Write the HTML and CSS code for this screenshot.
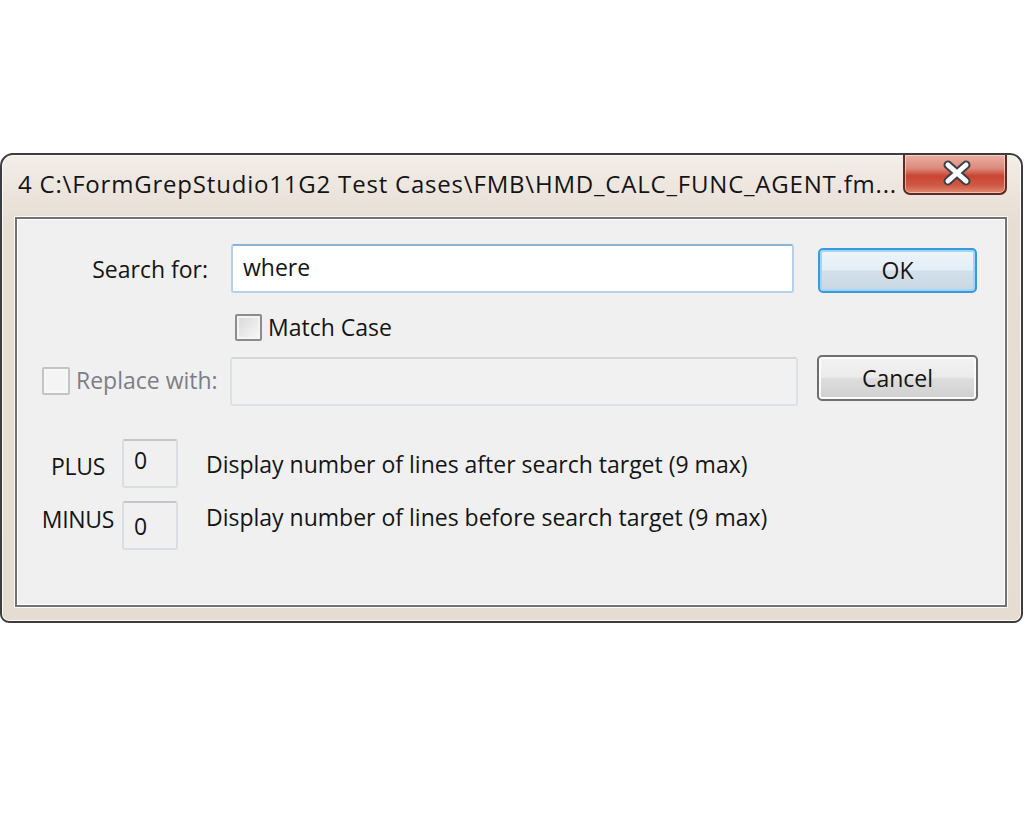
FILE: index.html
```html
<!DOCTYPE html>
<html>
<head>
<meta charset="utf-8">
<link rel="stylesheet" href="styles.css">
</head>
<body>
<div class="window">
  <div class="titlebar">
    <span class="title">4 C:\FormGrepStudio11G2 Test Cases\FMB\HMD_CALC_FUNC_AGENT.fm...</span>
    <div class="close">
      <svg width="30" height="26" viewBox="0 0 30 26">
        <path d="M6 5 L24 21 M24 5 L6 21" stroke="#3d4044" stroke-width="9" stroke-linecap="round"/>
        <path d="M6 5 L24 21 M24 5 L6 21" stroke="#ffffff" stroke-width="5" stroke-linecap="round"/>
      </svg>
    </div>
  </div>
  <div class="client">
    <div class="row row-search">
      <span class="lbl-search">Search for:</span>
      <div class="field field-focus">where</div>
      <div class="btn btn-default">OK</div>
    </div>
    <div class="row row-match">
      <span class="check"></span>
      <span class="check-label">Match Case</span>
    </div>
    <div class="row row-replace">
      <div class="replace-lead">
        <span class="check check-disabled"></span>
        <span class="check-label dim">Replace with:</span>
      </div>
      <div class="field field-disabled"></div>
      <div class="btn btn-cancel">Cancel</div>
    </div>
    <div class="row row-count row-plus">
      <span class="count-label">PLUS</span>
      <div class="count-box count-box-plus">0</div>
      <span class="count-text">Display number of lines after search target (9 max)</span>
    </div>
    <div class="row row-count row-minus">
      <span class="count-label">MINUS</span>
      <div class="count-box count-box-minus">0</div>
      <span class="count-text">Display number of lines before search target (9 max)</span>
    </div>
  </div>
</div>
</body>
</html>
```
FILE: styles.css
```css
* { box-sizing: border-box; }
html, body { margin: 0; padding: 0; background: #ffffff; }
body {
  width: 1024px;
  height: 819px;
  overflow: hidden;
  font-family: "Open Sans", "Noto Sans", "DejaVu Sans", sans-serif;
  color: #151515;
}
.window {
  margin-top: 153px;
  width: 1023px;
  height: 470px;
  border: 2px solid #3d3d3d;
  border-radius: 13px 13px 9px 9px;
  background: linear-gradient(#f3eee9 0px, #ece4dc 40px, #e6ddd3 70px, #e5dcd2 100%);
  box-shadow: inset 0 0 0 1px #fbf8f5;
  display: flex;
  flex-direction: column;
}
.titlebar {
  height: 62px;
  display: flex;
  align-items: flex-start;
  padding-left: 16px;
}
.title {
  margin-top: 15px;
  font-size: 24px;
  line-height: 28px;
  color: #141414;
  white-space: nowrap;
  letter-spacing: 0.8px;
}
.close {
  flex: none;
  margin-left: auto;
  margin-right: 14px;
  width: 104px;
  height: 40px;
  border: 2px solid #5d2a24;
  border-top: none;
  border-radius: 0 0 7px 7px;
  background: linear-gradient(#eab0a5 0%, #dc8a7c 35%, #c94431 55%, #cf5a44 80%, #e08a72 100%);
  box-shadow: inset 0 0 0 1px rgba(255, 225, 215, 0.6);
  display: flex;
  align-items: center;
  justify-content: center;
}
.close svg { margin-left: 4px; margin-top: -2px; }
.client {
  margin: 0 14px 0 13px;
  height: 390px;
  border: 2px solid #727272;
  background: #f0f0f0;
  box-shadow: 0 0 0 1px #fbf9f6, inset 0 0 0 1px #ffffff;
  display: flex;
  flex-direction: column;
  font-size: 23px;
  line-height: 30px;
}
.row {
  display: flex;
  align-items: center;
}
.row-search {
  margin-top: 25px;
  height: 49px;
}
.lbl-search {
  width: 191px;
  text-align: right;
}
.field {
  height: 49px;
  border-radius: 3px;
  padding-left: 10px;
  display: flex;
  align-items: center;
  padding-bottom: 4px;
}
.field-focus {
  margin-left: 23px;
  width: 563px;
  background: #ffffff;
  border: 2px solid #b4d1ea;
  border-top-color: #8bb3d8;
}
.btn {
  display: flex;
  align-items: center;
  justify-content: center;
  border-radius: 5px;
}
.btn-default {
  margin-left: 24px;
  margin-top: 3px;
  width: 159px;
  height: 45px;
  border: 2px solid #3a9ad9;
  background: linear-gradient(#edf5fb 0%, #e4eef6 48%, #d3e0eb 52%, #c9d8e5 100%);
  box-shadow: inset 0 0 0 2px #9fd6f5;
}
.row-match {
  margin-top: 21px;
  padding-left: 218px;
  height: 27px;
}
.check {
  flex: none;
  width: 27px;
  height: 27px;
  border: 2px solid #8c8c8c;
  border-radius: 2px;
  background: linear-gradient(135deg, #d7d7d7 0%, #ececec 60%, #f8f8f8 100%);
  box-shadow: inset 0 0 0 2px #f4f4f4;
}
.check-label {
  margin-left: 6px;
  padding-bottom: 2px;
  white-space: nowrap;
}
.row-replace {
  margin-top: 14px;
  height: 51px;
  align-items: flex-start;
}
.replace-lead {
  width: 213px;
  padding-left: 25px;
  display: flex;
  align-items: center;
  height: 51px;
}
.check-disabled {
  width: 28px;
  height: 28px;
  border-color: #c4c4c4;
  background: #f4f4f4;
  box-shadow: inset 0 0 0 2px #f7f7f7;
}
.dim { color: #7e7e86; }
.field-disabled {
  margin-top: 2px;
  width: 568px;
  background: #f1f1f1;
  border: 2px solid #dde1e5;
  border-top-color: #d4d6d8;
}
.btn-cancel {
  margin-left: 19px;
  width: 161px;
  height: 46px;
  border: 2px solid #6f6f6f;
  background: linear-gradient(#f3f3f3 0%, #ebebeb 48%, #dddddd 52%, #d0d0d0 100%);
  box-shadow: inset 0 0 0 2px #fbfbfb;
}
.row-count {
  height: 49px;
  align-items: flex-start;
}
.row-plus { margin-top: 33px; }
.row-minus { margin-top: 13px; }
.count-label {
  width: 105px;
  padding-left: 17px;
  text-align: center;
  letter-spacing: -0.3px;
}
.row-plus .count-label { margin-top: 12px; }
.row-minus .count-label { margin-top: 3px; }
.count-box {
  width: 56px;
  height: 49px;
  border: 2px solid #dadee3;
  border-top-color: #c3c5c8;
  border-radius: 3px;
  background: #f0f0f0;
  padding-left: 10px;
}
.count-box-plus { padding-top: 4px; }
.count-box-minus { padding-top: 8px; }
.count-text {
  margin-left: 28px;
  margin-top: 10px;
  white-space: nowrap;
}
.row-minus .count-text { margin-top: 1px; }
```
